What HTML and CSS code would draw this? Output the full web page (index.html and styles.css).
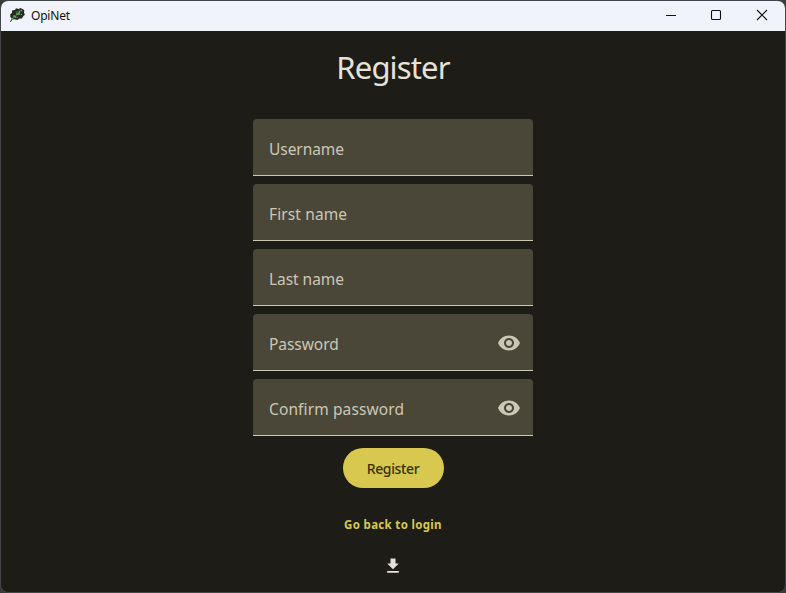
FILE: index.html
```html
<!DOCTYPE html>
<html lang="en">
<head>
<meta charset="utf-8">
<title>OpiNet</title>
<link rel="stylesheet" href="styles.css">
</head>
<body>
<div class="window">
  <header class="titlebar">
    <svg class="app-icon" width="16" height="16" viewBox="0 0 16 16">
      <path d="M.8 15L2.800 11.800 1.300 10 1.300 7 3 6 3 3.500 6 3 7 1.200 9.500 2 11.500 1 13.500 2 15.300 3 15 6 16 7.500 14 9.500 13 11.500 10.500 11.500 8.500 13 5.500 12.300 3.500 12.600 1.600 15Z" fill="#252a25"/>
      <path d="M3 12L13 3M5 10.200L5 7.500M5.500 10L9 10.500M8 7.500L8 4M9 6.800L13 7.500M10.200 5.500L11 2.500" fill="none" stroke="#6ab458" stroke-width="1.200" stroke-dasharray="2 .9"/>
    </svg>
    <span class="app-name">OpiNet</span>
    <div class="controls">
      <svg width="46" height="30" viewBox="0 0 46 30"><path d="M18 14.500H28"/></svg>
      <svg width="46" height="30" viewBox="0 0 46 30"><rect x="17.500" y="9.500" width="9" height="9" rx="1"/></svg>
      <svg width="46" height="30" viewBox="0 0 46 30"><path d="M17 9L27 19M27 9L17 19"/></svg>
    </div>
  </header>
  <main class="page">
    <h1 class="title">Register</h1>
    <div class="fields">
      <div class="field"><span class="username">Username</span></div>
      <div class="field"><span class="first">First name</span></div>
      <div class="field"><span class="last">Last name</span></div>
      <div class="field"><span class="password">Password</span>
        <svg width="24" height="24" viewBox="0 0 24 24"><path d="M12 4.500C7 4.500 2.730 7.610 1 12c1.730 4.390 6 7.500 11 7.500s9.270-3.110 11-7.500c-1.730-4.390-6-7.500-11-7.500zM12 17c-2.760 0-5-2.240-5-5s2.240-5 5-5 5 2.240 5 5-2.240 5-5 5zm0-8c-1.660 0-3 1.340-3 3s1.340 3 3 3 3-1.340 3-3-1.340-3-3-3z"/></svg>
      </div>
      <div class="field"><span class="confirm">Confirm password</span>
        <svg width="24" height="24" viewBox="0 0 24 24"><path d="M12 4.500C7 4.500 2.730 7.610 1 12c1.730 4.390 6 7.500 11 7.500s9.270-3.110 11-7.500c-1.730-4.390-6-7.500-11-7.500zM12 17c-2.760 0-5-2.240-5-5s2.240-5 5-5 5 2.240 5 5-2.240 5-5 5zm0-8c-1.660 0-3 1.340-3 3s1.340 3 3 3 3-1.340 3-3-1.340-3-3-3z"/></svg>
      </div>
    </div>
    <button class="submit">Register</button>
    <a class="back">Go back to login</a>
    <svg class="download" width="20" height="20" viewBox="0 0 24 24"><path d="M19 9h-4V3H9v6H5l7 7 7-7zM5 18v2h14v-2H5z"/></svg>
  </main>
</div>
</body>
</html>
```
FILE: styles.css
```css
* { box-sizing: border-box; }
body {
  margin: 0;
  background: #3a3b3e;
  font-family: "Segoe UI", "Noto Sans", "Open Sans", sans-serif;
}
.window {
  height: 593px;
  border: 1px solid #45464a;
  border-radius: 8px;
  overflow: hidden;
  background: #1d1c16;
}
.titlebar {
  display: flex;
  align-items: center;
  height: 30px;
  padding-left: 8px;
  background: #f0f3fa;
}
.app-icon { margin-top: -3px; }
.app-name {
  margin-left: 6px;
  font-size: 12px;
  line-height: 16px;
  letter-spacing: -0.2px;
  color: #111;
}
.controls {
  display: flex;
  margin: 0 -1px 0 auto;
}
.controls svg {
  fill: none;
  stroke: #111;
  stroke-width: 1.1;
}
.page {
  display: flex;
  flex-direction: column;
  align-items: center;
}
.title {
  margin: 16px 0 32px;
  font-size: 31px;
  font-weight: 400;
  line-height: 40px;
  letter-spacing: -0.85px;
  color: #e7e2d9;
}
.fields {
  display: grid;
  gap: 8px;
  width: 280px;
}
.field {
  display: flex;
  align-items: center;
  justify-content: space-between;
  height: 57px;
  padding: 0 12px 0 16px;
  border-bottom: 1px solid #cbc7b5;
  border-radius: 4px 4px 0 0;
  background: #4a4739;
  font-size: 15.5px;
  line-height: 22px;
  letter-spacing: -0.05px;
  color: #cbc7b5;
}
.field span { padding-top: 4px; }
.field .first, .field .confirm { letter-spacing: 0.12px; }
.field svg {
  margin-top: 2px;
  fill: #cbc7b5;
}
.submit {
  width: 101px;
  height: 40px;
  margin-top: 12px;
  padding: 0;
  border: 0;
  border-radius: 20px;
  background: #d9c84f;
  color: #373100;
  font: 500 14px "Segoe UI", "Noto Sans", sans-serif;
  letter-spacing: -0.35px;
}
.back {
  margin-top: 28px;
  font-size: 11.5px;
  font-weight: 700;
  line-height: 18px;
  letter-spacing: 0.32px;
  color: #d9c84f;
}
.download {
  margin-top: 22px;
  fill: #e7e2d9;
}
```
